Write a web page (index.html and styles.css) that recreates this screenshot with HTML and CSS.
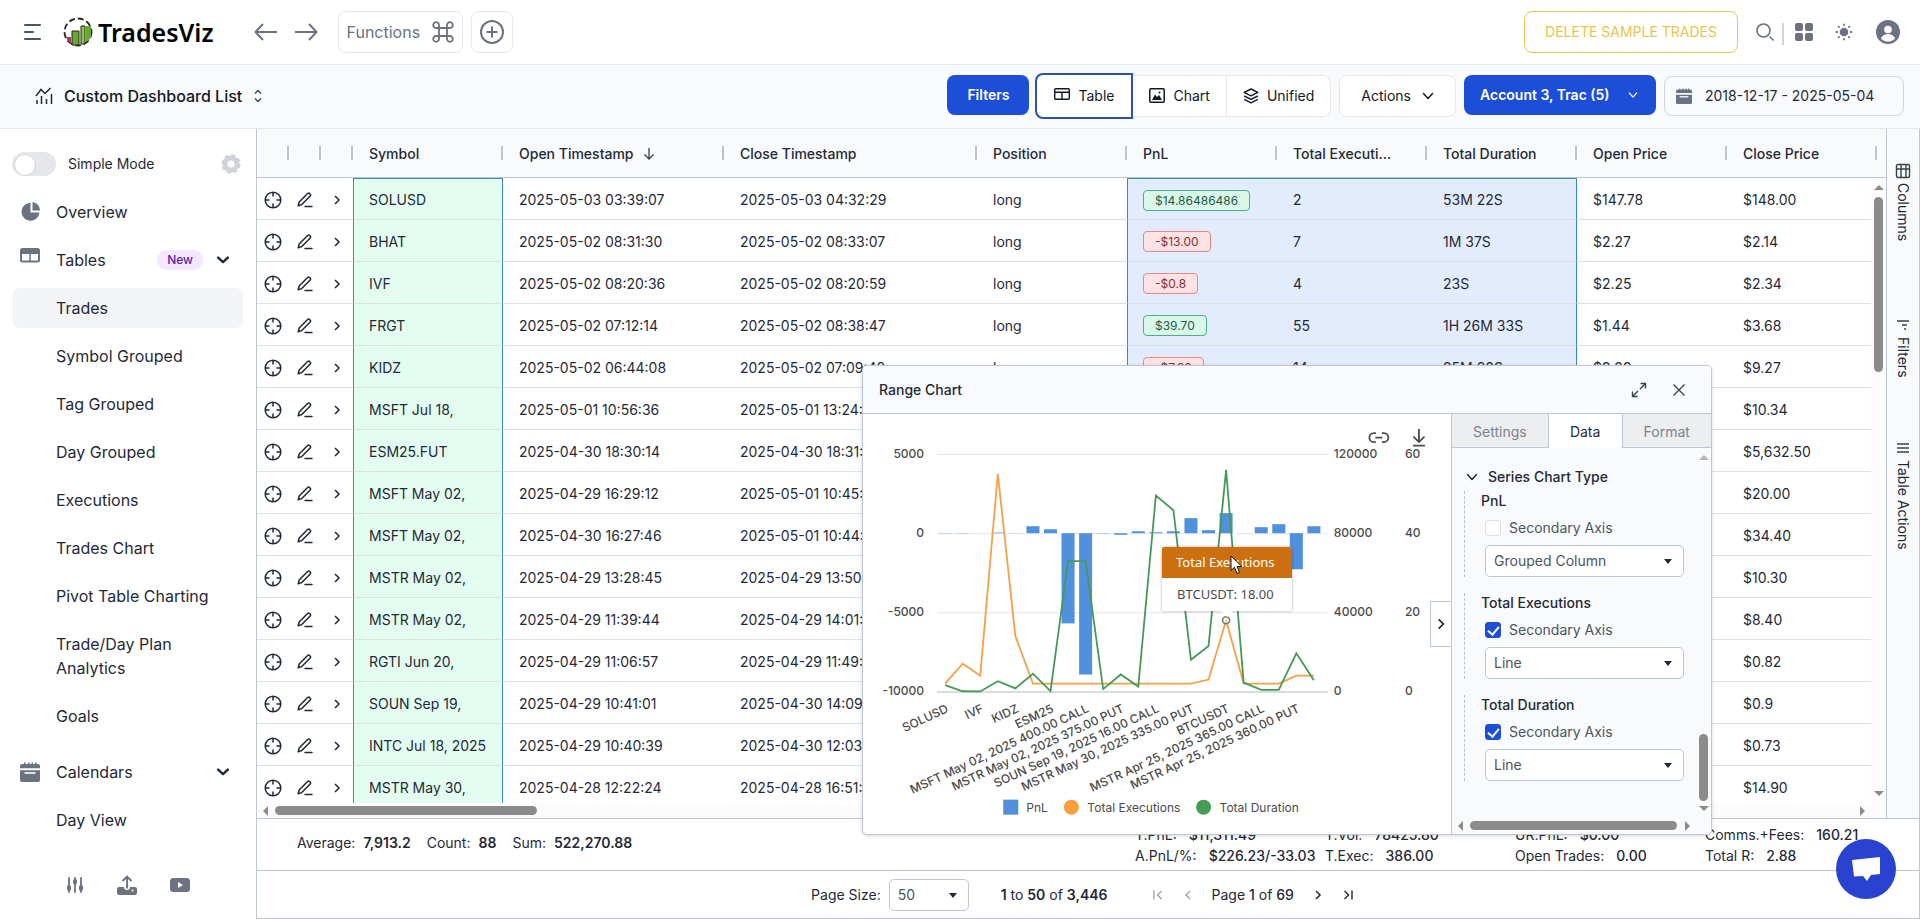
FILE: index.html
```html
<!DOCTYPE html>
<html lang="en">
  <head>
    <meta charset="utf-8" />
    <title>TradesViz</title>
    <link rel="stylesheet" href="styles.css">
  </head>
  <body>
    <!-- shared icons -->
    <svg class="sprite" width="0" height="0">
      <symbol id="i-down" viewBox="0 0 12 12"><path d="M1.5 3.5 6 8.5l4.5-5" fill="none" stroke="currentColor" stroke-width="1.5" stroke-linecap="round" stroke-linejoin="round" /></symbol>
      <symbol id="i-down-bold" viewBox="0 0 12 12"><path d="M1.2 3.6 6 8.2l4.8-4.6" fill="none" stroke="currentColor" stroke-width="2.4" stroke-linecap="round" stroke-linejoin="round" /></symbol>
      <symbol id="i-right" viewBox="0 0 12 12"><path d="M4 2l4 4-4 4" fill="none" stroke="currentColor" stroke-width="1.5" /></symbol>
      <symbol id="i-target" viewBox="0 0 18 18"><g fill="none" stroke="currentColor" stroke-width="1.5"><circle cx="9" cy="9" r="7.8" /><path d="M9 1v4.5M9 12.5V17M1 9h4.5M12.5 9H17" /></g></symbol>
      <symbol id="i-pen" viewBox="0 0 18 18"><path d="M2.2 14.8 3.2 11 11.6 2.4a1.3 1.3 0 0 1 1.9 0l.7.7a1.3 1.3 0 0 1 0 1.9L5.8 13.6zM9 15.6h7" fill="none" stroke="currentColor" stroke-width="1.5" stroke-linejoin="round" stroke-linecap="round" /></symbol>
      <symbol id="i-calendar" viewBox="0 0 20 20"><path d="M0 8.3h20V18a2 2 0 0 1-2 2H2a2 2 0 0 1-2-2zM0 6.3V4a2 2 0 0 1 2-2h2V.5h1.5V2H8V.5h1.5V2h2V.5H13V2h2V.5h1.5V2H18a2 2 0 0 1 2 2v2.300z" fill="currentColor" /><path d="M4.500 11h11" stroke="#fff" stroke-width="1.600" /></symbol>
    </svg>

    <header class="topbar">
      <button class="icon-btn" aria-label="Menu">
        <svg width="18" height="18" viewBox="0 0 18 18" stroke="#4b5563" stroke-width="2" stroke-linecap="round"><path d="M2 2h15M2 9h8M2 16h15" /></svg>
      </button>
      <a class="logo" href="#">
        <svg width="30" height="30" viewBox="0 0 30 30">
          <circle cx="15" cy="15" r="13.500" fill="none" stroke="#222" stroke-width="1.800" stroke-dasharray="6 3" />
          <path d="M3 20h5v7Q4 24 3 20z" fill="#9f3b52" />
          <path d="M9 14h7v14H9z" fill="#6aa834" stroke="#222" />
          <path d="M18 9h4v18h-4z" fill="#8cc63f" stroke="#222" />
          <path d="M23 9h5v11q-2 4-5 5z" fill="#6aa834" />
        </svg>
        <span>TradesViz</span>
      </a>
      <div class="history">
        <button class="icon-btn" aria-label="Back"><svg width="24" height="20" viewBox="0 0 24 20"><path d="M23 10H2M9 2 1.500 10 9 18" fill="none" stroke="#6b7280" stroke-width="2" /></svg></button>
        <button class="icon-btn" aria-label="Forward"><svg width="24" height="20" viewBox="0 0 24 20"><path d="M1 10h21M15 2l7.500 8-7.500 8" fill="none" stroke="#6b7280" stroke-width="2" /></svg></button>
      </div>
      <div class="quick">
        <button class="box-btn functions">
          <span>Functions</span>
          <svg width="22" height="22" viewBox="0 0 22 22"><path d="M7 7h8v8H7zM7 7V4.200A2.900 2.900 0 1 0 4.200 7zM15 7h2.800A2.900 2.900 0 1 0 15 4.200zM15 15v2.800a2.900 2.900 0 1 0 2.800-2.800zM7 15H4.200A2.900 2.900 0 1 0 7 17.800z" fill="none" stroke="#6b7280" stroke-width="1.800" /></svg>
        </button>
        <button class="box-btn add" aria-label="Add">
          <svg width="24" height="24" viewBox="0 0 24 24" fill="none" stroke="#6b7280" stroke-width="2"><circle cx="12" cy="12" r="11" /><path d="M12 6.500v11M6.500 12h11" /></svg>
        </button>
      </div>
      <div class="spacer"></div>
      <button class="delete-btn">DELETE SAMPLE TRADES</button>
      <div class="tools">
        <button class="icon-btn" aria-label="Search"><svg width="20" height="20" viewBox="0 0 20 20" fill="none" stroke="#6b7280" stroke-width="1.600"><circle cx="8.500" cy="8.500" r="6.500" /><path d="M14.500 14.500l4 4" /></svg></button>
        <span class="divider"></span>
        <button class="icon-btn" aria-label="Apps"><svg width="18" height="18" viewBox="0 0 18 18" fill="#6b7280"><rect width="8" height="8" rx="2" /><rect x="10" width="8" height="8" rx="2" /><rect y="10" width="8" height="8" rx="2" /><rect x="10" y="10" width="8" height="8" rx="2" /></svg></button>
        <button class="icon-btn sun" aria-label="Theme"><svg width="18" height="18" viewBox="0 0 18 18"><circle cx="9" cy="9" r="4.300" fill="#6b7280" /><path d="M9 .8v2M9 15.200v2M.8 9h2M15.200 9h2M3.200 3.200l1.400 1.400M13.400 13.400l1.400 1.400M3.200 14.800l1.400-1.400M13.400 4.600l1.400-1.400" stroke="#6b7280" stroke-width="1.800" /></svg></button>
        <button class="icon-btn" aria-label="Profile"><svg width="24" height="24" viewBox="0 0 24 24"><circle cx="12" cy="12" r="12" fill="#6b7280" /><circle cx="12" cy="9.500" r="3.800" fill="#fff" /><path d="M4.800 18.500a8 8 0 0 1 14.400 0A9.600 9.600 0 0 1 12 21.600a9.600 9.600 0 0 1-7.200-3.100z" fill="#fff" /></svg></button>
      </div>
    </header>

    <div class="subbar">
      <button class="dash-title">
        <svg width="18" height="18" viewBox="0 0 18 18" fill="none" stroke="#1f2937" stroke-width="1.500"><path d="M1 9 6 2.500l4 4 5.500-5.500M2 17v-4M6.500 17V9M11.500 17v-5M16.500 17V7" /></svg>
        <span>Custom Dashboard List</span>
        <svg class="updown" width="10" height="14" viewBox="0 0 10 14" fill="none" stroke="#374151" stroke-width="1.300"><path d="M2 4.500 5 1.500l3 3M2 9.500l3 3 3-3" /></svg>
      </button>
      <div class="spacer"></div>
      <button class="primary filters">Filters</button>
      <div class="segments">
        <button class="segment active"><svg width="16" height="16" viewBox="0 0 16 16" fill="none" stroke="#111827" stroke-width="1.400"><rect x=".7" y=".7" width="14.600" height="10.500" rx="1" /><path d="M.7 4.200h14.600M8 4.200v7" /></svg>Table</button>
        <button class="segment"><svg width="16" height="16" viewBox="0 0 16 16"><rect x=".8" y=".8" width="14.400" height="13.400" rx="1" fill="none" stroke="#111827" stroke-width="1.500" /><path d="M3 12 6 6.500l2 2.500L10 7l3 5z" fill="#111827" /><circle cx="10.500" cy="4.500" r="1" fill="#111827" /></svg>Chart</button>
        <button class="segment"><svg width="16" height="16" viewBox="0 0 16 16" fill="none" stroke="#111827" stroke-width="1.400" stroke-linejoin="round"><path d="M8 1l6.800 3.400L8 7.800 1.200 4.400zM1.200 8 8 11.400 14.800 8M1.200 11.400 8 14.800l6.800-3.400" /></svg>Unified</button>
      </div>
      <button class="actions">Actions <svg width="12" height="12"><use href="#i-down" /></svg></button>
      <button class="primary account"><span>Account 3, Trac (5)</span><svg width="10" height="10"><use href="#i-down" /></svg></button>
      <label class="date-range"><svg width="16" height="16"><use href="#i-calendar" /></svg><input type="text" value="2018-12-17 - 2025-05-04" aria-label="Date range" /></label>
    </div>

    <div class="layout">
      <aside class="sidebar">
        <div class="mode-row">
          <label class="switch"><input type="checkbox" /><span>Simple Mode</span></label>
          <svg width="20" height="20" viewBox="0 0 20 20"><circle cx="10" cy="10" r="6" fill="none" stroke="#cfd3d9" stroke-width="5" /><circle cx="10" cy="10" r="8.200" fill="none" stroke="#cfd3d9" stroke-width="3" stroke-dasharray="4 2.440" /></svg>
        </div>
        <nav>
          <a class="nav-item" href="#">
            <svg width="20" height="20" viewBox="0 0 20 20" fill="#6b7280"><path d="M10.500.800v9.700h9A9 9 0 1 1 10.500.800z" /><path d="M12.500 0a8.500 8.500 0 0 1 7.500 8.500h-7.500z" /></svg>
            Overview</a>
          <a class="nav-item" href="#">
            <svg class="raised" width="20" height="20" viewBox="0 0 20 20"><rect x="1" y="1" width="18" height="12.500" rx="1.500" fill="none" stroke="#6b7280" stroke-width="2" /><path d="M1 1h18v5H1zM9.300 5h1.500v9H9.300z" fill="#6b7280" /></svg>
            Tables <span class="new">New</span> <svg width="12" height="12"><use href="#i-down-bold" /></svg></a>
          <a class="nav-item sub current" href="#">Trades</a>
          <a class="nav-item sub" href="#">Symbol Grouped</a>
          <a class="nav-item sub" href="#">Tag Grouped</a>
          <a class="nav-item sub" href="#">Day Grouped</a>
          <a class="nav-item sub" href="#">Executions</a>
          <a class="nav-item sub" href="#">Trades Chart</a>
          <a class="nav-item sub" href="#">Pivot Table Charting</a>
          <a class="nav-item sub" href="#">Trade/Day Plan Analytics</a>
          <a class="nav-item sub" href="#">Goals</a>
          <a class="nav-item group" href="#">
            <svg class="muted" width="20" height="20"><use href="#i-calendar" /></svg>
            Calendars <svg class="caret" width="12" height="12"><use href="#i-down-bold" /></svg></a>
          <a class="nav-item sub" href="#">Day View</a>
        </nav>
        <div class="side-footer">
          <svg width="18" height="18" viewBox="0 0 18 18"><path d="M3 2v14M9 2v14M15 2v14" stroke="#6b7280" stroke-width="1.800" stroke-linecap="round" /><path d="M3 11v2M9 5v1.500M15 11v2" stroke="#6b7280" stroke-width="4" stroke-linecap="round" /></svg>
          <svg width="20" height="20" viewBox="0 0 20 20"><path d="M0 14a2 2 0 0 1 2-2h5a3 3 0 0 0 6 0h5a2 2 0 0 1 2 2v4a2 2 0 0 1-2 2H2a2 2 0 0 1-2-2z" fill="#6b7280" /><path d="M10 13.500V2M5.500 6 10 1.500 14.500 6" fill="none" stroke="#6b7280" stroke-width="1.900" /><circle cx="15.500" cy="15.500" r="1" fill="#fff" /></svg>
          <svg width="20" height="16" viewBox="0 0 20 16"><rect y="1" width="20" height="14" rx="3.500" fill="#6b7280" /><path d="M8 5l5 3-5 3z" fill="#fff" /></svg>
        </div>
      </aside>

      <main class="grid">
        <div class="grid-top">
          <div class="grid-body">
            <div class="table-clip">
              <table>
                <colgroup>
                  <col class="c-icon" /><col class="c-icon" /><col class="c-icon" />
                  <col class="c-std" /><col class="c-open" /><col class="c-close" />
                  <col class="c-std" /><col class="c-std" /><col class="c-std" />
                  <col class="c-std" /><col class="c-std" /><col class="c-std" /><col />
                </colgroup>
                <thead>
                  <tr>
                    <th></th><th></th><th></th>
                    <th>Symbol</th>
                    <th>Open Timestamp <svg width="12" height="12" viewBox="0 0 12 12"><path d="M6 0v11M1.500 6.500 6 11l4.500-4.500" fill="none" stroke="#374151" stroke-width="1.300" /></svg></th>
                    <th>Close Timestamp</th>
                    <th>Position</th>
                    <th>PnL</th>
                    <th>Total Executi...</th>
                    <th>Total Duration</th>
                    <th>Open Price</th>
                    <th>Close Price</th>
                    <th></th>
                  </tr>
                </thead>
                <tbody id="rows"></tbody>
              </table>
            </div>
            <div class="vscroll"><i class="tri up"></i><i class="thumb"></i><i class="tri down"></i></div>
            <div class="hscroll"><i class="tri left"></i><i class="thumb"></i><i class="tri right"></i></div>
          </div>
          <div class="rail">
            <button><svg width="16" height="16" viewBox="0 0 16 16" fill="none" stroke="#374151" stroke-width="1.400"><rect x="1.500" y="1.500" width="13" height="13" rx="1.500" /><path d="M1.500 6h13M6 1.500v13M11 1.500v13" /></svg>Columns</button>
            <button><svg width="16" height="16" viewBox="0 0 16 16" stroke="#374151" stroke-width="1.400"><path d="M2 4h12M7 8h5M9 12h2" /></svg>Filters</button>
            <button><svg width="16" height="16" viewBox="0 0 16 16" stroke="#374151" stroke-width="1.500"><path d="M2 4h12M2 8h12M2 12h12" /></svg>Table Actions</button>
          </div>
        </div>

        <div class="status">
          <div class="aggregates">
            <span>Average:<b>7,913.2</b></span>
            <span>Count:<b>88</b></span>
            <span>Sum:<b>522,270.88</b></span>
          </div>
          <div class="totals">
            <span>T.PnL:<b>$11,311.49</b></span>
            <span>T.Vol:<b>78425.80</b></span>
            <span>UR.PnL:<b>$0.00</b></span>
            <span>Comms.+Fees:<b>160.21</b></span>
            <span>A.PnL/%:<b>$226.23/-33.03</b></span>
            <span>T.Exec:<b>386.00</b></span>
            <span>Open Trades:<b>0.00</b></span>
            <span>Total R:<b>2.88</b></span>
          </div>
        </div>

        <div class="paging">
          <label for="size">Page Size:</label>
          <span class="select small"><select id="size"><option>50</option></select></span>
          <span class="range"><b>1</b> to <b>50</b> of <b>3,446</b></span>
          <div class="pager">
            <button class="off" aria-label="First page"><svg width="12" height="12" viewBox="0 0 12 12"><path d="M2 1.500v9M9.500 2l-4 4 4 4" fill="none" stroke="currentColor" stroke-width="1.400" /></svg></button>
            <button class="off" aria-label="Previous page"><svg width="12" height="12" viewBox="0 0 12 12"><path d="M8 2 4 6l4 4" fill="none" stroke="currentColor" stroke-width="1.400" /></svg></button>
            <span>Page <b>1</b> of <b>69</b></span>
            <button aria-label="Next page"><svg width="12" height="12"><use href="#i-right" /></svg></button>
            <button aria-label="Last page"><svg width="12" height="12" viewBox="0 0 12 12"><path d="M10 1.500v9M2.500 2l4 4-4 4" fill="none" stroke="currentColor" stroke-width="1.400" /></svg></button>
          </div>
        </div>
      </main>
    </div>

    <section class="dialog">
      <div class="dialog-head">
        <h2>Range Chart</h2>
        <button class="icon-btn" aria-label="Expand"><svg width="16" height="16" viewBox="0 0 16 16" fill="none" stroke="#374151" stroke-width="1.400"><path d="M9.500 1.500h5v5M14 2 9 7M6.500 14.500h-5v-5M2 14l5-5" /></svg></button>
        <button class="icon-btn" aria-label="Close"><svg width="14" height="14" viewBox="0 0 14 14" stroke="#374151" stroke-width="1.300"><path d="M1.500 1.500l11 11M12.500 1.500l-11 11" /></svg></button>
      </div>
      <div class="dialog-body">
        <div class="chart">
          <svg id="chart" viewBox="0 0 587 420"></svg>
          <div class="tooltip">
            <div class="tip-title">Total Executions</div>
            <div class="tip-body">BTCUSDT: 18.00</div>
          </div>
          <svg class="cursor" width="13" height="20" viewBox="0 0 13 20"><path d="M1 1v14.500l3.500-3.200L7 18.500l2.600-1.100L7.100 11.500H12z" fill="#fff" stroke="#111" /></svg>
          <button class="collapse" aria-label="Collapse panel"><svg width="14" height="14"><use href="#i-right" /></svg></button>
        </div>
        <div class="panel">
          <div class="tabs">
            <button>Settings</button><button class="on">Data</button><button>Format</button>
          </div>
          <div class="panel-scroll">
            <div class="panel-content">
              <h3><svg width="12" height="12"><use href="#i-down" /></svg>Series Chart Type</h3>
              <fieldset>
                <legend>PnL</legend>
                <label><input type="checkbox" />Secondary Axis</label>
                <span class="select"><select aria-label="PnL chart type"><option>Grouped Column</option></select></span>
              </fieldset>
              <fieldset>
                <legend>Total Executions</legend>
                <label><input type="checkbox" checked />Secondary Axis</label>
                <span class="select"><select aria-label="Executions chart type"><option>Line</option></select></span>
              </fieldset>
              <fieldset>
                <legend>Total Duration</legend>
                <label><input type="checkbox" checked />Secondary Axis</label>
                <span class="select"><select aria-label="Duration chart type"><option>Line</option></select></span>
              </fieldset>
            </div>
            <div class="vscroll"><i class="tri up faded"></i><i class="thumb"></i><i class="tri down"></i></div>
            <div class="hscroll"><i class="tri left"></i><i class="thumb"></i><i class="tri right"></i></div>
          </div>
        </div>
      </div>
    </section>

    <button class="chat" aria-label="Chat"><svg width="30" height="26" viewBox="0 0 30 26"><path d="M1 4 29 1v17l-9 1-4 6-4-5-9 .5z" fill="#fff" /></svg></button>

    <script src="script.js"></script>
  </body>
</html>
```

FILE: styles.css
```css
* {
  box-sizing: border-box;
}

body {
  margin: 0;
  height: 100vh;
  display: flex;
  flex-direction: column;
  position: relative;
  overflow: hidden;
  background: #fff;
  color: #1f2937;
  font-family: Inter, "Liberation Sans", sans-serif;
  font-size: 14px;
  line-height: 20px;
}

button,
input,
select {
  font: inherit;
  color: inherit;
}

button {
  border: 0;
  padding: 0;
  background: none;
}

svg {
  flex: none;
}

.sprite {
  position: absolute;
}

b {
  font-weight: 500;
}

.spacer {
  flex: 1;
}

.icon-btn {
  display: flex;
}

/* top bar */
.topbar {
  flex: none;
  height: 65px;
  display: flex;
  align-items: center;
  padding: 0 20px 0 23px;
  border-bottom: 1px solid #e5e7eb;
}

.logo {
  display: flex;
  align-items: center;
  gap: 5px;
  margin-left: 22px;
  color: #000;
  text-decoration: none;
  font-family: "Noto Sans", sans-serif;
  font-size: 25px;
  font-weight: 600;
}

.history {
  display: flex;
  gap: 16px;
  margin-left: 40px;
}

.quick {
  display: flex;
  gap: 8px;
  margin-left: 20px;
}

.box-btn {
  height: 42px;
  display: flex;
  align-items: center;
  justify-content: center;
  gap: 12px;
  padding: 0 8px;
  border: 1px solid #e5e7eb;
  border-radius: 8px;
  color: #6b7280;
  font-size: 16px;
}

.delete-btn {
  height: 42px;
  padding: 0 20px;
  border: 1px solid #e3c94c;
  border-radius: 8px;
  color: #eac350;
}

.tools {
  display: flex;
  align-items: center;
  margin-left: 17px;
}

.divider {
  width: 2px;
  height: 22px;
  margin: 4px 11px 0 7px;
  background: #d1d5db;
}

.sun {
  margin: 0 23px 0 22px;
}

/* dashboard bar */
.subbar {
  flex: none;
  height: 64px;
  display: flex;
  align-items: center;
  gap: 8px;
  padding: 0 16px 1px 35px;
  border-bottom: 1px solid #e5e7eb;
  background: #f9fafb;
}

.dash-title {
  display: flex;
  align-items: center;
  gap: 11px;
  font-size: 16px;
  font-weight: 500;
  color: #111827;
}

.primary {
  height: 40px;
  margin-bottom: 2px;
  padding: 0 20px;
  border-radius: 8px;
  background: #1d4ed8;
  color: #fff;
  font-weight: 600;
}

.filters {
  margin-right: -2px;
}

.account {
  width: 192px;
  display: flex;
  align-items: center;
  justify-content: space-between;
  padding: 0 18px 0 16px;
}

.segments {
  display: flex;
  align-items: center;
}

.segment,
.actions {
  height: 42px;
  display: flex;
  align-items: center;
  gap: 8px;
  padding: 0 16px;
  border: 1px solid #e5e7eb;
  background: #fff;
  color: #111827;
}

.segment + .segment {
  border-left: 0;
}

.segment:last-child {
  border-radius: 0 8px 8px 0;
}

.segment.active {
  height: 46px;
  padding: 0 17px;
  border: 2px solid #2a50b0;
  border-radius: 8px 0 0 8px;
}

.actions {
  gap: 11px;
  padding: 0 21px;
  border-radius: 8px;
}

.date-range {
  width: 240px;
  height: 40px;
  display: flex;
  align-items: center;
  gap: 13px;
  padding: 0 11px;
  border: 1px solid #d1d5db;
  border-radius: 8px;
  color: #6b7280;
}

.date-range input {
  flex: 1;
  min-width: 0;
  padding: 0;
  border: 0;
  background: none;
  color: #1f2937;
}

/* sidebar */
.layout {
  flex: 1;
  min-height: 0;
  display: flex;
}

.sidebar {
  flex: none;
  width: 256px;
  display: flex;
  flex-direction: column;
  padding: 23px 13px 0 12px;
}

.mode-row {
  display: flex;
  align-items: center;
  justify-content: space-between;
  padding-right: 2px;
}

.switch {
  display: flex;
  align-items: center;
  gap: 12px;
}

.switch input {
  appearance: none;
  width: 44px;
  height: 24px;
  margin: 0;
  padding: 2px;
  border-radius: 12px;
  background: #e5e7eb;
}

.switch input::before {
  content: "";
  display: block;
  width: 20px;
  height: 20px;
  border: 1px solid #d1d5db;
  border-radius: 50%;
  background: #fff;
}

nav {
  flex: 1;
  min-height: 0;
  display: flex;
  flex-direction: column;
  gap: 8px;
  padding-top: 16px;
  overflow: hidden;
}

.nav-item {
  flex: none;
  display: flex;
  align-items: center;
  gap: 16px;
  padding: 8px 14px 8px 8px;
  border-radius: 8px;
  color: #1f2937;
  font-size: 16px;
  line-height: 24px;
  text-decoration: none;
}

.nav-item.sub {
  padding-left: 44px;
}

.nav-item.current {
  background: #f3f4f6;
}

.nav-item.group {
  margin-top: 8px;
}

.nav-item .caret {
  margin-left: auto;
}

.raised {
  align-self: flex-start;
}

.muted {
  color: #6b7280;
}

.new {
  margin-left: auto;
  margin-right: -2px;
  padding: 0 10px;
  border-radius: 10px;
  background: #f3e8ff;
  color: #5b21a6;
  font-size: 12px;
  font-weight: 500;
  line-height: 20px;
}

.side-footer {
  display: flex;
  align-items: center;
  justify-content: center;
  gap: 33px;
  height: 68px;
}

/* grid */
.grid {
  flex: 1;
  min-width: 0;
  display: flex;
  flex-direction: column;
  border: 1px solid #bdc7d3;
  border-top: 0;
}

.grid-top {
  flex: 1;
  min-height: 0;
  display: flex;
}

.grid-body {
  flex: 1;
  min-width: 0;
  display: flex;
  flex-direction: column;
  position: relative;
}

.table-clip {
  flex: 1;
  min-height: 0;
  overflow: hidden;
}

table {
  width: 100%;
  table-layout: fixed;
  border-collapse: separate;
  border-spacing: 0;
}

.c-icon {
  width: 32px;
}

.c-std {
  width: 150px;
}

.c-open {
  width: 221px;
}

.c-close {
  width: 253px;
}

th {
  height: 49px;
  padding: 2px 16px 0;
  border-bottom: 1px solid #bdc7d3;
  background: #f9fafb linear-gradient(#bdc3cd, #bdc3cd) no-repeat right center / 2px 14px;
  overflow: hidden;
  white-space: nowrap;
  text-align: left;
  font-weight: 500;
}

th:nth-child(-n + 3) {
  padding: 0;
}

th:last-child {
  padding: 0;
  background: #f9fafb linear-gradient(#bdc3cd, #bdc3cd) no-repeat left center / 0 0;
}

th svg {
  margin-left: 6px;
  vertical-align: -1px;
}

td {
  height: 42px;
  padding: 2px 16px 0;
  border-bottom: 1px solid #dde1e6;
  overflow: hidden;
  white-space: nowrap;
}

td:nth-child(-n + 3) {
  padding: 0;
  text-align: center;
}

td svg {
  vertical-align: middle;
}

/* selected ranges */
td:nth-child(4) {
  padding-left: 15px;
  border-left: 1px solid #348eac;
  border-right: 1px solid #348eac;
  background: #e3fdf0;
}

td:nth-child(8),
td:nth-child(9),
td:nth-child(10) {
  background: #e2ecfd;
}

td:nth-child(8) {
  padding-left: 15px;
  border-left: 1px solid #348eac;
}

td:nth-child(10) {
  border-right: 1px solid #348eac;
}

tr:first-child td:nth-child(4),
tr:first-child td:nth-child(8),
tr:first-child td:nth-child(9),
tr:first-child td:nth-child(10) {
  border-top: 1px solid #348eac;
}

.badge {
  display: inline-block;
  padding: 0 11px;
  border: 1px solid;
  border-radius: 4px;
  font-size: 12px;
  line-height: 19px;
  vertical-align: middle;
}

.badge.win {
  border-color: #43b28d;
  background: #d9f8e8;
  color: #1f5a48;
}

.badge.loss {
  border-color: #ea8686;
  background: #fde3e3;
  color: #8f2d2d;
}

/* scrollbars */
.vscroll,
.hscroll {
  display: flex;
  align-items: center;
  background: #fcfcfc;
}

.vscroll {
  width: 15px;
  flex-direction: column;
  padding: 7px 0;
}

.hscroll {
  height: 15px;
  padding: 0 6px;
}

.thumb {
  border-radius: 5px;
  background: #8b8b8b;
}

.vscroll .thumb {
  width: 9px;
  margin-top: 7px;
}

.hscroll .thumb {
  height: 9px;
  margin-left: 7px;
}

.tri {
  border: 5px solid transparent;
}

.tri.up {
  border-top: 0;
  border-bottom-color: #8b8b8b;
}

.tri.down {
  margin-top: auto;
  border-bottom: 0;
  border-top-color: #8b8b8b;
}

.tri.left {
  border-left: 0;
  border-right-color: #8b8b8b;
}

.tri.right {
  margin-left: auto;
  border-right: 0;
  border-left-color: #8b8b8b;
}

.tri.faded {
  border-bottom-color: #b5b5b5;
}

.grid-body .vscroll {
  position: absolute;
  top: 49px;
  right: 0;
  bottom: 15px;
}

.grid-body .vscroll .thumb {
  height: 175px;
}

.grid-body .hscroll {
  padding-right: 21px;
}

.grid-body .hscroll .thumb {
  width: 262px;
}

.rail {
  flex: none;
  width: 33px;
  display: flex;
  flex-direction: column;
  align-items: center;
  gap: 62px;
  padding-top: 34px;
  border-left: 1px solid #bdc7d3;
  background: #f9fafb;
}

.rail button {
  display: flex;
  align-items: center;
  gap: 4px;
  writing-mode: vertical-rl;
}

.rail button:first-child {
  margin-bottom: 14px;
}

/* status bar */
.status {
  flex: none;
  height: 53px;
  display: flex;
  align-items: center;
  justify-content: space-between;
  padding: 0 24px 0 40px;
  border-top: 1px solid #bdc7d3;
  border-bottom: 1px solid #bdc7d3;
}

.status b {
  margin-left: 8px;
  font-weight: 600;
}

.aggregates {
  display: flex;
  gap: 16px;
  padding-bottom: 3px;
}

.totals {
  display: grid;
  grid-template-columns: repeat(4, 190px);
  line-height: 21px;
}

.totals span {
  white-space: nowrap;
}

.totals b {
  margin-left: 12px;
  font-weight: 500;
}

.paging {
  flex: none;
  height: 47px;
  display: flex;
  align-items: center;
  justify-content: center;
  padding-right: 11px;
}

.paging b {
  font-weight: 600;
}

.pager b {
  font-weight: 500;
}

.select {
  display: block;
  position: relative;
}

.select select {
  appearance: none;
  width: 100%;
  height: 32px;
  padding: 0 8px;
  border: 1px solid #bdc7d3;
  border-radius: 5px;
  background: #fff;
  color: #4b5563;
}

.select::after {
  content: "";
  position: absolute;
  top: 14px;
  right: 12px;
  border: 4px solid transparent;
  border-top: 5px solid #1f2937;
  border-bottom: 0;
}

.select.small {
  width: 80px;
  margin: 0 32px 0 8px;
}

.pager {
  display: flex;
  align-items: center;
  gap: 18px;
  margin-left: 44px;
}

.pager button {
  display: flex;
}

.pager .off {
  color: #9ca3af;
}

/* range chart dialog */
.dialog {
  position: absolute;
  right: 208px;
  bottom: 84px;
  width: 850px;
  border: 1px solid #bdc7d3;
  border-radius: 5px;
  background: #fff;
  overflow: hidden;
  box-shadow: 0 1px 4px rgba(0, 0, 0, 0.15);
}

.dialog-head {
  height: 48px;
  display: flex;
  align-items: center;
  gap: 25px;
  padding: 0 25px 0 16px;
  border-bottom: 1px solid #bdc7d3;
  background: #f9fafb;
}

.dialog h2 {
  flex: 1;
  margin: 0;
  font-size: 14px;
  font-weight: 500;
}

.dialog-body {
  height: 420px;
  display: flex;
}

.chart {
  flex: 1;
  position: relative;
  font-size: 12px;
}

#chart {
  display: block;
  width: 100%;
}

#chart text {
  fill: #4b4b4b;
  font-weight: 500;
}

#chart .legend text {
  font-weight: 400;
}

.tooltip {
  position: absolute;
  left: 299px;
  top: 133px;
  width: 130px;
  background: #fff;
  font-family: "Noto Sans", sans-serif;
  font-size: 13px;
  border-radius: 2px;
  box-shadow: 0 0 3px rgba(0, 0, 0, 0.35);
}

.tooltip::after {
  content: "";
  position: absolute;
  left: 59px;
  top: 64px;
  border: 6px solid transparent;
  border-top-color: #fff;
  border-bottom: 0;
}

.tip-title {
  padding: 0 14px;
  border-radius: 2px 2px 0 0;
  background: #cc6f10;
  color: #fff;
  line-height: 31px;
}

.tip-body {
  padding: 0 15px;
  color: #4b4b4b;
  line-height: 33px;
}

.cursor {
  position: absolute;
  left: 367px;
  top: 141px;
}

.collapse {
  position: absolute;
  right: 0;
  top: 187px;
  width: 21px;
  height: 46px;
  display: flex;
  align-items: center;
  justify-content: center;
  border: 1px solid #bdc7d3;
  border-right: 0;
  background: #fff;
}

.panel {
  width: 260px;
  display: flex;
  flex-direction: column;
  border-left: 1px solid #bdc7d3;
  background: #f9fafb;
}

.tabs {
  display: flex;
}

.tabs button {
  flex: 1 1 auto;
  height: 34px;
  padding: 2px 18px 0;
  border-bottom: 1px solid #bdc7d3;
  background: #eceef0;
  color: #7d828a;
}

.tabs .on {
  border: 1px solid #bdc7d3;
  border-width: 0 1px;
  background: #fff;
  color: #1f2937;
}

.panel-scroll {
  flex: 1;
  display: grid;
  grid-template-columns: 1fr 15px;
  grid-template-rows: 1fr 16px;
}

.panel-scroll .vscroll,
.panel-scroll .hscroll {
  background: none;
}

.panel-scroll .vscroll {
  padding-bottom: 7px;
}

.panel-scroll .vscroll .thumb {
  margin-top: auto;
  height: 67px;
}

.panel-scroll .vscroll .tri.down {
  margin-top: 5px;
}

.panel-scroll .hscroll .thumb {
  flex: 1;
  margin-right: 8px;
}

.panel-content {
  padding: 19px 0 0 12px;
}

.panel h3 {
  display: flex;
  align-items: center;
  gap: 10px;
  margin: 0 0 4px 2px;
  font-size: 14px;
  font-weight: 500;
}

fieldset {
  width: 220px;
  height: 86px;
  margin: 0 0 16px;
  padding: 0 0 0 20px;
  border: 0;
  border-left: 1px dashed #bdc1c7;
}

fieldset legend {
  float: left;
  margin-left: -4px;
  padding: 0;
  font-weight: 500;
}

fieldset label {
  clear: both;
  display: flex;
  align-items: center;
  gap: 8px;
  padding: 7px 0;
  color: #4b5563;
}

fieldset input {
  appearance: none;
  width: 16px;
  height: 16px;
  margin: 0;
  border: 1px solid #dcdfe3;
  border-radius: 3px;
  background: #fff;
}

fieldset input:checked {
  border-color: #1d4ed8;
  background: #1d4ed8;
}

fieldset input:checked::after {
  content: "";
  display: block;
  width: 5px;
  height: 9px;
  margin: 1px auto;
  border: solid #fff;
  border-width: 0 2px 2px 0;
  transform: rotate(40deg);
}

.chat {
  position: absolute;
  right: 24px;
  bottom: 20px;
  width: 60px;
  height: 60px;
  display: flex;
  align-items: center;
  justify-content: center;
  border-radius: 50%;
  background: #2a42d0;
}
```

FILE: script.js
```js
// symbol, opened, closed, position, pnl, executions, duration, open price, close price
const trades = [
  ["SOLUSD", "2025-05-03 03:39:07", "2025-05-03 04:32:29", "long", "$14.86486486", "2", "53M 22S", "$147.78", "$148.00"],
  ["BHAT", "2025-05-02 08:31:30", "2025-05-02 08:33:07", "long", "-$13.00", "7", "1M 37S", "$2.27", "$2.14"],
  ["IVF", "2025-05-02 08:20:36", "2025-05-02 08:20:59", "long", "-$0.8", "4", "23S", "$2.25", "$2.34"],
  ["FRGT", "2025-05-02 07:12:14", "2025-05-02 08:38:47", "long", "$39.70", "55", "1H 26M 33S", "$1.44", "$3.68"],
  ["KIDZ", "2025-05-02 06:44:08", "2025-05-02 07:09:48", "long", "-$7.90", "14", "25M 20S", "$9.29", "$9.27"],
  ["MSFT Jul 18,", "2025-05-01 10:56:36", "2025-05-01 13:24:", "", "", "", "", "", "$10.34"],
  ["ESM25.FUT", "2025-04-30 18:30:14", "2025-04-30 18:31:", "", "", "", "", "", "$5,632.50"],
  ["MSFT May 02,", "2025-04-29 16:29:12", "2025-05-01 10:45:", "", "", "", "", "", "$20.00"],
  ["MSFT May 02,", "2025-04-30 16:27:46", "2025-05-01 10:44:", "", "", "", "", "", "$34.40"],
  ["MSTR May 02,", "2025-04-29 13:28:45", "2025-04-29 13:50:", "", "", "", "", "", "$10.30"],
  ["MSTR May 02,", "2025-04-29 11:39:44", "2025-04-29 14:01:", "", "", "", "", "", "$8.40"],
  ["RGTI Jun 20,", "2025-04-29 11:06:57", "2025-04-29 11:49:", "", "", "", "", "", "$0.82"],
  ["SOUN Sep 19,", "2025-04-29 10:41:01", "2025-04-30 14:09:", "", "", "", "", "", "$0.9"],
  ["INTC Jul 18, 2025", "2025-04-29 10:40:39", "2025-04-30 12:03:", "", "", "", "", "", "$0.73"],
  ["MSTR May 30,", "2025-04-28 12:22:24", "2025-04-28 16:51:", "", "", "", "", "", "$14.90"],
];

const icon = (id, size) => `<svg width="${size}" height="${size}"><use href="#${id}" /></svg>`;

document.getElementById("rows").innerHTML = trades
  .map((trade) => {
    const cells = trade.map((value, i) => {
      if (i === 4 && value) {
        const kind = value[0] === "-" ? "loss" : "win";
        return `<td><span class="badge ${kind}">${value}</span></td>`;
      }
      return `<td>${value}</td>`;
    });
    return `<tr><td>${icon("i-target", 18)}</td><td>${icon("i-pen", 18)}</td><td>${icon("i-right", 12)}</td>${cells.join("")}<td></td></tr>`;
  })
  .join("");

// range chart
const pnl = [15, -13, -1, 40, -8, 440, 250, -5700, -8930, -20, -100, 120, 60, 120, 950, 190, 1270, 5, 380, 570, -2280, 440];
const executions = [2, 7, 4, 55, 14, 2, 2, 2, 2, 2, 2, 2, 2, 2, 2, 3, 18, 2, 2, 2, 4, 4];
const duration = [3202, 97, 23, 5193, 1520, 8970, 200, 65900, 65900, 1200, 8600, 2500, 99000, 91600, 16000, 23000, 112000, 4500, 800, 800, 19300, 5700];
const labels = [
  "SOLUSD", "IVF", "KIDZ", "ESM25",
  "MSFT May 02, 2025 400.00 CALL",
  "MSTR May 02, 2025 375.00 PUT",
  "SOUN Sep 19, 2025 16.00 CALL",
  "MSTR May 30, 2025 335.00 PUT",
  "BTCUSDT",
  "MSTR Apr 25, 2025 365.00 CALL",
  "MSTR Apr 25, 2025 360.00 PUT",
];

const yTop = 40;
const yBottom = 277;
const yZero = 119;
const x = (i) => 82 + i * 17.53;
const y = (value, max) => yBottom - (value * (yBottom - yTop)) / max;

const line = (data, max, color) =>
  `<polyline points="${data.map((v, i) => `${x(i)},${y(v, max)}`).join(" ")}" fill="none" stroke="${color}" stroke-width="1.8" />`;

let svg = "";
[
  [40, "5000", "120000", "60"],
  [119, "0", "80000", "40"],
  [198, "-5000", "40000", "20"],
  [277, "-10000", "0", "0"],
].forEach(([pos, left, right, far]) => {
  const color = pos === yBottom ? "#b5bcc2" : "#dfe5ec";
  svg += `<path d="M74 ${pos + 0.5}H464" stroke="${color}" />`;
  svg += `<text x="61" y="${pos + 4}" text-anchor="end">${left}</text>`;
  svg += `<text x="470" y="${pos + 4}">${right}</text>`;
  svg += `<text x="541" y="${pos + 4}">${far}</text>`;
});

pnl.forEach((value, i) => {
  const h = (Math.abs(value) * 79) / 5000;
  svg += `<rect x="${x(i) - 6.5}" y="${value > 0 ? yZero - h : yZero}" width="13" height="${h}" fill="#5090dc" />`;
});

svg += line(executions, 60, "#f5a04a");
svg += line(duration, 120000, "#459a56");
svg += `<circle cx="${x(16)}" cy="${y(18, 60)}" r="3.5" fill="#fff" fill-opacity=".5" stroke="#777" stroke-width="1.5" />`;

labels.forEach((label, i) => {
  svg += `<text transform="translate(${x(i * 2) + 4} 297) rotate(-25)" text-anchor="end">${label}</text>`;
});

svg += `<g class="legend">
  <rect x="140" y="385" width="15" height="15" fill="#5090dc" /><text x="163" y="397">PnL</text>
  <circle cx="208" cy="392.5" r="7.5" fill="#fd9f3e" /><text x="224" y="397">Total Executions</text>
  <circle cx="340" cy="392.5" r="7.5" fill="#459d55" /><text x="356" y="397">Total Duration</text>
</g>
<g fill="none" stroke="#4b4b4b" stroke-width="1.8">
  <path d="M512 19h-2a4.500 4.500 0 0 0 0 9h2M518 19h2a4.500 4.500 0 0 1 0 9h-2M511.500 23.500h7" />
  <path d="M555 15v13M549.500 22.500 555 28l5.500-5.500M549 31.500h12" />
</g>`;

document.getElementById("chart").innerHTML = svg;
```
